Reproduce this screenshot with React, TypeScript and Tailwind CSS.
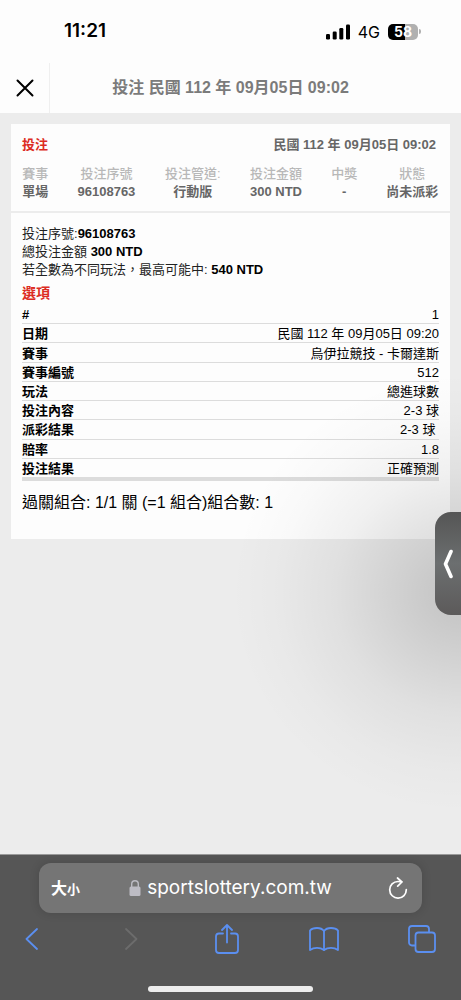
const summary = [
  { label: "賽事", value: "單場" },
  { label: "投注序號", value: "96108763" },
  { label: "投注管道:", value: "行動版" },
  { label: "投注金額", value: "300 NTD" },
  { label: "中獎", value: "-" },
  { label: "狀態", value: "尚未派彩" },
];

const details = [
  { label: "#", value: "1" },
  { label: "日期", value: "民國 112 年 09月05日 09:20" },
  { label: "賽事", value: "烏伊拉競技 - 卡爾達斯" },
  { label: "賽事編號", value: "512" },
  { label: "玩法", value: "總進球數" },
  { label: "投注內容", value: "2-3 球" },
  { label: "派彩結果", value: "2-3 球\u00a0" },
  { label: "賠率", value: "1.8" },
  { label: "投注結果", value: "正確預測" },
];

function StatusBar() {
  return (
    <div className="flex items-center justify-between h-[63px] pl-16 pr-10 font-['Inter','Noto_Sans_CJK_TC',sans-serif]">
      <span className="text-[19px] font-semibold">11:21</span>
      <div className="flex items-center gap-2">
        <svg className="w-6 h-4" viewBox="0 0 24 16" fill="currentColor">
          <rect x="0" y="10" width="4" height="5.5" rx="1.2" />
          <rect x="6.7" y="7.5" width="4" height="8" rx="1.2" />
          <rect x="13.3" y="4" width="4" height="11.5" rx="1.2" />
          <rect x="20" y="0.5" width="4" height="15" rx="1.2" />
        </svg>
        <span className="text-base">4G</span>
        <div className="flex items-center gap-px">
          <div className="flex items-center justify-center w-[30px] h-4 rounded-[5px] bg-linear-to-r from-black from-58% to-[#b0b0b0] to-58%">
            <span className="text-sm leading-4 font-bold text-white">58</span>
          </div>
          <div className="w-0.5 h-[5px] rounded-r-full bg-[#b0b0b0]"></div>
        </div>
      </div>
    </div>
  );
}

function TitleBar() {
  return (
    <header className="flex h-[50px]">
      <button type="button" aria-label="關閉" className="flex items-center justify-center w-[50px] border-r border-[#efefef]">
        <svg className="w-[18px] h-[18px]" viewBox="0 0 18 18" fill="none" stroke="black" strokeWidth="2" strokeLinecap="round">
          <path d="M1.5 1.5l15 15M16.5 1.5l-15 15" />
        </svg>
      </button>
      <h1 className="flex-1 self-center pr-[50px] text-center text-base font-bold text-[#7b7b7b]">投注 民國 112 年 09月05日 09:02</h1>
    </header>
  );
}

function BetSummary() {
  return (
    <section className="px-[11px] pt-3 pb-2.5 border-b-2 border-[#ececec]">
      <div className="flex justify-between text-[13px] leading-[18px] font-bold">
        <h2 className="text-[#dc2b22]">投注</h2>
        <span className="pr-[3px] text-[#666]">民國 112 年 09月05日 09:02</span>
      </div>
      <table className="w-full mt-[11px] text-[13px] leading-[18px] whitespace-nowrap">
        <thead>
          <tr className="text-[#b8b8b8]">
            {summary.map((s) => (
              <th key={s.label} className="px-3.5 first:pl-0 last:pr-0 font-medium">{s.label}</th>
            ))}
          </tr>
        </thead>
        <tbody>
          <tr className="text-center font-bold text-[#666]">
            {summary.map((s) => (
              <td key={s.label} className="px-3.5 first:pl-0 last:pr-0">{s.value}</td>
            ))}
          </tr>
        </tbody>
      </table>
    </section>
  );
}

function BetDetails() {
  return (
    <section className="px-[11px] pt-3 pb-6">
      <div className="text-[13px] leading-[18px] text-[#222]">
        <p>投注序號:<b className="text-black">96108763</b></p>
        <p>總投注金額 <b className="text-black">300 NTD</b></p>
        <p>若全數為不同玩法，最高可能中: <b className="text-black">540 NTD</b></p>
      </div>
      <h2 className="mt-1 text-sm leading-5 font-bold text-[#dc2b22]">選項</h2>
      <table className="w-full h-44 mt-0.5 text-[13px] leading-4 border-b-4 border-[#dcdcdc]">
        <tbody>
          {details.map((d) => (
            <tr key={d.label} className="border-b border-[#dcdcdc] last:border-b-0">
              <th className="pt-0.5 text-left font-bold">{d.label}</th>
              <td className="pt-0.5 text-right">{d.value}</td>
            </tr>
          ))}
        </tbody>
      </table>
      <p className="mt-2.5 text-base leading-6">過關組合: 1/1 關 (=1 組合)組合數: 1</p>
    </section>
  );
}

function BrowserBar() {
  return (
    <footer className="border-t border-[#9a9a9a] bg-[#565656] pt-2 pb-2 font-['Inter','Noto_Sans_CJK_TC',sans-serif]">
      <div className="flex items-center justify-between h-[50px] mx-[39px] px-3 rounded-xl bg-[#757575] text-white shadow-[0_0_10px_rgba(0,0,0,0.15)]">
        <button type="button" className="w-10 text-left leading-6 whitespace-nowrap">
          <span className="text-base font-bold">大</span>
          <span className="text-[13px] font-bold">小</span>
        </button>
        <a href="#" className="flex items-center gap-1.5 text-[19px]">
          <svg className="w-3 h-4" viewBox="0 0 12 16">
            <rect x="0.5" y="6.5" width="11" height="9.5" rx="1.5" fill="#bdbcc4" />
            <path d="M2.7 7V4a3.3 3.3 0 0 1 6.6 0v3" fill="none" stroke="#bdbcc4" strokeWidth="1.4" />
          </svg>
          sportslottery.com.tw
        </a>
        <button type="button" aria-label="重新載入" className="flex justify-end w-10 pr-0.5">
          <svg className="w-5 h-[22px]" viewBox="0 0 20 22" fill="none" stroke="currentColor" strokeWidth="1.7" strokeLinecap="round" strokeLinejoin="round">
            <path d="M18.3 12.6A8.3 8.3 0 1 1 10 4.5c1.2 0 2.4.1 3.6.4" />
            <path d="M9.5 1l4.4 4-4.2 4.2" />
          </svg>
        </button>
      </div>
      <nav className="flex items-center justify-between h-[52px] pl-4 pr-6 text-[#5b8ff0]">
        <button type="button" aria-label="上一頁" className="flex justify-center w-[30px]">
          <svg className="w-[13px] h-[22px]" viewBox="0 0 13 22" fill="none" stroke="currentColor" strokeWidth="1.8" strokeLinecap="round" strokeLinejoin="round">
            <path d="M12 1L1.5 11 12 21" />
          </svg>
        </button>
        <button type="button" aria-label="下一頁" disabled className="flex justify-end w-[30px] pr-1.5 text-[#6c6c6c]">
          <svg className="w-[13px] h-[22px]" viewBox="0 0 13 22" fill="none" stroke="currentColor" strokeWidth="1.8" strokeLinecap="round" strokeLinejoin="round">
            <path d="M1 1l10.5 10L1 21" />
          </svg>
        </button>
        <button type="button" aria-label="分享" className="flex justify-center w-[30px]">
          <svg className="w-6 h-[30px]" viewBox="0 0 24 30" fill="none" stroke="currentColor" strokeWidth="1.8" strokeLinecap="round" strokeLinejoin="round">
            <path d="M8 9.5H4a3 3 0 0 0-3 3V26a3 3 0 0 0 3 3h16a3 3 0 0 0 3-3V12.5a3 3 0 0 0-3-3h-4" />
            <path d="M12 18.5V1M7 6l5-5 5 5" />
          </svg>
        </button>
        <button type="button" aria-label="書籤" className="flex justify-center w-[30px]">
          <svg className="w-[30px] h-6" viewBox="0 0 30 24" fill="none" stroke="currentColor" strokeWidth="1.8" strokeLinecap="round" strokeLinejoin="round">
            <path d="M15 4c-1.5-2-4-3-7-3S2.500 1.800 1 3.500V23c2-1.500 4.500-2.200 7-2.200s5 .7 7 2.200c2-1.500 4.500-2.200 7-2.200s5 .7 7 2.200V3.500C27.500 1.800 25 1 22 1s-5.500 1-7 3z" />
            <path d="M15 4v19" />
          </svg>
        </button>
        <button type="button" aria-label="分頁" className="flex justify-center w-[30px]">
          <svg className="w-7 h-7" viewBox="0 0 28 28" fill="none" stroke="currentColor" strokeWidth="1.8" strokeLinejoin="round">
            <path d="M7.5 20.5H4a3 3 0 0 1-3-3V4a3 3 0 0 1 3-3h14a3 3 0 0 1 3 3v3.5" />
            <rect x="7.5" y="7.5" width="19.5" height="19.5" rx="3" />
          </svg>
        </button>
      </nav>
      <div className="w-[165px] h-1.5 mx-auto mt-[21px] rounded-full bg-[#ededed]"></div>
    </footer>
  );
}

export default function App() {
  return (
    <div lang="zh-Hant-TW" className="flex flex-col min-h-screen bg-[#fdfdfd] text-black font-['Liberation_Sans','Noto_Sans_CJK_TC',sans-serif]">
      <StatusBar />
      <TitleBar />
      <main className="relative flex-1 overflow-hidden bg-[#ececec] px-[11px] pt-[11px]">
        <div className="bg-[#fdfdfd]">
          <BetSummary />
          <BetDetails />
        </div>
        {/* drawer handle and its shadow float over the page */}
        <div className="absolute right-0 top-60 w-60 h-[480px] pointer-events-none bg-[radial-gradient(ellipse_230px_220px_at_100%_50%,rgba(0,0,0,0.18),rgba(0,0,0,0.12)_25%,rgba(0,0,0,0.05)_55%,rgba(0,0,0,0.015)_80%,transparent)]"></div>
        <button
          type="button"
          aria-label="開啟側欄"
          className="absolute right-0 top-[399px] flex items-center justify-center w-[26px] h-[103px] rounded-l-2xl bg-linear-to-b from-[#555] via-[#6c6f70] to-[#5c5a5a]"
        >
          <svg className="w-2.5 h-[30px]" viewBox="0 0 10 30" fill="none" stroke="white" strokeWidth="3.6" strokeLinecap="round" strokeLinejoin="round">
            <path d="M8 2.5L2.5 15 8 27.5" />
          </svg>
        </button>
      </main>
      <BrowserBar />
    </div>
  );
}
